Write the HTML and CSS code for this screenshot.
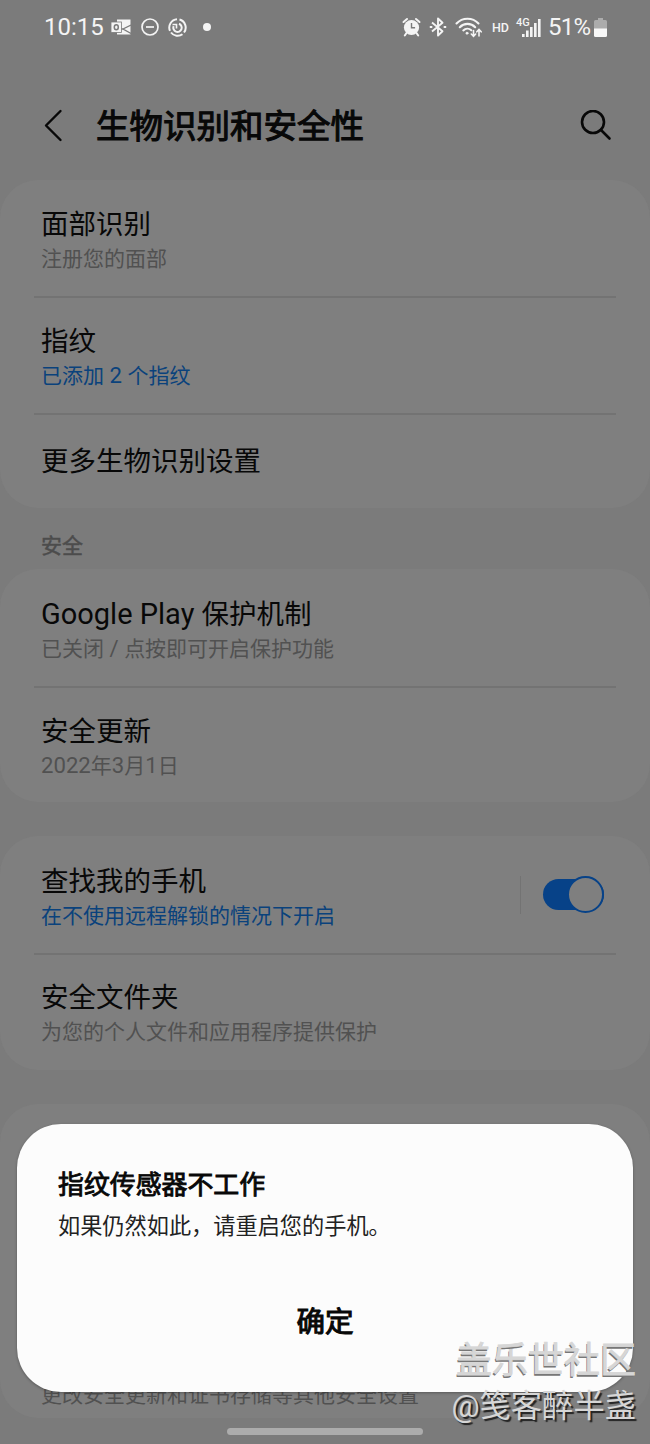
FILE: index.html
```
<!DOCTYPE html>
<html lang="zh-CN">
<head>
    <meta charset="UTF-8">
    <meta name="viewport" content="width=device-width, initial-scale=1.0">
    <title>生物识别和安全性</title>
    <link rel="stylesheet" href="styles.css">
</head>
<body>
    <div class="screen">
        <div class="status-bar">
            <div class="status-left">
                <span class="time">10:15</span>
                <!-- Outlook -->
                <svg class="icon-mail" width="20" height="18" viewBox="0 0 20 18">
                    <path d="M6 1.500h13.500v15H6z" fill="#f4f4f4"/>
                    <path d="M20 7l-8 4 8 4.500M12 11H9" fill="none" stroke="#7b7b7b" stroke-width="1.300"/>
                    <rect x="0" y="4" width="10.500" height="10.500" fill="#f4f4f4" stroke="#7b7b7b" stroke-width="0.800"/>
                    <ellipse cx="5.300" cy="9.200" rx="2" ry="2.500" fill="none" stroke="#7b7b7b" stroke-width="1.500"/>
                </svg>
                <!-- Do not disturb -->
                <svg class="icon-dnd" width="18" height="18" viewBox="0 0 18 18" fill="none" stroke="#f4f4f4" stroke-width="1.7">
                    <circle cx="9" cy="9" r="8"/>
                    <path d="M5 9h8"/>
                </svg>
                <!-- Sync -->
                <svg class="icon-sync" width="19" height="19" viewBox="0 0 19 19" fill="none" stroke="#f4f4f4" stroke-width="2">
                    <path d="M11.5 1.5A8.3 8.3 0 0 1 16 14.5"/>
                    <path d="M14.5 16.2A8.3 8.3 0 0 1 3 14.5"/>
                    <path d="M2 12.8A8.3 8.3 0 0 1 9 1.2"/>
                    <path d="M11 5.800A4.200 4.200 0 1 1 5.600 8.200"/>
                    <path d="M4.500 6.500h4v4" stroke-width="1.600"/>
                </svg>
                <span class="dot"></span>
            </div>
            <div class="status-right">
                <!-- Alarm -->
                <svg class="icon-alarm" width="19" height="20" viewBox="0 0 19 20">
                    <circle cx="9.5" cy="10.5" r="7.6" fill="#f4f4f4"/>
                    <path d="M1.5 5L5 2M17.5 5L14 2M4.5 16L2.8 18.5M14.5 16l1.7 2.5" stroke="#f4f4f4" stroke-width="2" stroke-linecap="round"/>
                    <path d="M9.5 6v4.8h3.6" fill="none" stroke="#7b7b7b" stroke-width="1.4"/>
                </svg>
                <!-- Bluetooth -->
                <svg class="icon-bt" width="18" height="20" viewBox="0 0 18 20" fill="none" stroke="#f4f4f4" stroke-width="1.9">
                    <path d="M3 5.500l10.500 8.700L9 18.500v-17l4.500 4.300L3 14.500" stroke-linejoin="round"/>
                    <path d="M.8 10h2.500M14.700 10h2.500" stroke-width="2.2"/>
                </svg>
                <!-- Wi-Fi -->
                <svg class="icon-wifi" width="28" height="21" viewBox="0 0 28 21" fill="none" stroke="#f4f4f4" stroke-width="2.1" stroke-linecap="round">
                    <path d="M1.5 6.5a15 15 0 0 1 22 0"/>
                    <path d="M4.8 10.2a10.5 10.5 0 0 1 15.4 0"/>
                    <path d="M8.3 13.4a6 6 0 0 1 8-.2"/>
                    <circle cx="12" cy="16.2" r="1" fill="#f4f4f4" stroke-width="1"/>
                    <path d="M18.5 13.500V19M16.300 17l2.200 2.300 2.200-2.300M24 19v-6.500M21.800 14.800L24 12.500l2.200 2.300" stroke-width="1.6"/>
                </svg>
                <span class="hd">HD</span>
                <div class="signal">
                    <span class="net">4G</span>
                    <svg width="19" height="19" viewBox="0 0 19 19" fill="#f4f4f4">
                        <rect x="0" y="16" width="2.600" height="3"/>
                        <rect x="4" y="12.500" width="2.600" height="6.500"/>
                        <rect x="8" y="9" width="2.600" height="10"/>
                        <rect x="12" y="5" width="2.600" height="14"/>
                        <rect x="16" y="1" width="2.600" height="18"/>
                    </svg>
                </div>
                <span class="percent">51%</span>
                <!-- Battery -->
                <svg class="icon-battery" width="13" height="19" viewBox="0 0 13 19">
                    <path d="M4 0h5v2h2.500Q13 2 13 3.500V11H0V3.500Q0 2 1.500 2H4z" fill="#acacac"/>
                    <path d="M0 10.500h13v7q0 1.500-1.500 1.500h-10Q0 19 0 17.500z" fill="#f8f8f8"/>
                </svg>
            </div>
        </div>

        <div class="header">
            <svg width="20" height="34" viewBox="0 0 20 34" fill="none" stroke="#080808" stroke-width="2.4" stroke-linecap="round" stroke-linejoin="round">
                <path d="M16.500 2L2 16.500 16.500 31"/>
            </svg>
            <h1>生物识别和安全性</h1>
            <svg width="32" height="32" viewBox="0 0 32 32" fill="none" stroke="#080808" stroke-width="2.600" stroke-linecap="round">
                <circle cx="13" cy="12" r="11"/>
                <path d="M21 20l8.500 8.500"/>
            </svg>
        </div>

        <div class="card">
            <div class="row">
                <div class="title">面部识别</div>
                <div class="sub">注册您的面部</div>
            </div>
            <div class="row">
                <div class="title">指纹</div>
                <div class="sub active">已添加<span class="latin"> 2 </span>个指纹</div>
            </div>
            <div class="row single">
                <div class="title">更多生物识别设置</div>
            </div>
        </div>

        <h2 class="section">安全</h2>

        <div class="card security">
            <div class="row">
                <div class="title"><span class="latin">Google Play </span>保护机制</div>
                <div class="sub">已关闭<span class="latin"> / </span>点按即可开启保护功能</div>
            </div>
            <div class="row">
                <div class="title">安全更新</div>
                <div class="sub"><span class="latin">2022</span>年<span class="latin">3</span>月<span class="latin">1</span>日</div>
            </div>
        </div>

        <div class="card spaced device">
            <div class="row with-switch">
                <div>
                    <div class="title">查找我的手机</div>
                    <div class="sub active">在不使用远程解锁的情况下开启</div>
                </div>
                <div class="switch-area">
                    <div class="switch"><span class="knob"></span></div>
                </div>
            </div>
            <div class="row">
                <div class="title">安全文件夹</div>
                <div class="sub">为您的个人文件和应用程序提供保护</div>
            </div>
        </div>

        <div class="card spaced last">
            <div class="sub">更改安全更新和证书存储等其他安全设置</div>
        </div>

        <div class="dialog">
            <div class="dialog-title">指纹传感器不工作</div>
            <div class="dialog-text">如果仍然如此，请重启您的手机。</div>
            <button class="ok">确定</button>
        </div>

        <div class="nav-handle"></div>

        <div class="watermark">
            <div class="community">盖乐世社区</div>
            <div class="author">@笺客醉半盏</div>
        </div>
    </div>
</body>
</html>
```
FILE: styles.css
```
* {
    box-sizing: border-box;
}
body {
    margin: 0;
    font-family: Roboto, "Noto Sans CJK SC", sans-serif;
    background-color: #7b7b7b;
    color: #080808;
}
.screen {
    position: relative;
    width: 650px;
    height: 1444px;
    overflow: hidden;
}
svg {
    display: block;
    flex-shrink: 0;
}

/* status bar */
.status-bar {
    display: flex;
    justify-content: space-between;
    height: 54px;
    padding: 0 43px 0 44px;
    color: #f4f4f4;
}
.status-left, .status-right {
    display: flex;
    align-items: center;
}
.time, .percent {
    font-size: 24px;
    line-height: 56px;
}
.time {
    width: 59px;
}
.icon-mail {
    margin-left: 8px;
}
.icon-dnd {
    margin-left: 10px;
}
.icon-sync {
    margin-left: 9px;
}
.dot {
    width: 8px;
    height: 8px;
    margin-left: 16px;
    border-radius: 50%;
    background-color: #f4f4f4;
}
.icon-bt {
    margin-left: 8px;
}
.icon-wifi {
    margin-left: 8px;
}
.hd {
    margin-left: 9px;
    font-size: 12.5px;
    font-weight: 500;
}
.signal {
    display: flex;
    align-items: flex-end;
    margin-left: 7px;
}
.net {
    width: 14px;
    margin-right: -8px;
    font-size: 11px;
    font-weight: 500;
    line-height: 10px;
    align-self: flex-start;
}
.percent {
    width: 42px;
    margin-left: 7px;
    letter-spacing: -0.8px;
}
.icon-battery {
    margin-left: 4px;
}

/* title bar */
.header {
    display: flex;
    align-items: center;
    height: 126px;
    padding: 17px 38px 0 44px;
}
h1 {
    flex: 1;
    margin: 3px 0 0 32px;
    font-size: 33.5px;
    font-weight: 400;
    line-height: 50px;
    -webkit-text-stroke: 1.1px #080808;
}

/* settings list */
.card {
    border-radius: 38px;
    background-color: #7f7f7f;
}
.row {
    position: relative;
    height: 117px;
    padding: 27px 41px 0;
}
.row + .row::before {
    content: "";
    position: absolute;
    top: -1px;
    left: 34px;
    right: 34px;
    height: 2px;
    background-color: #737373;
}
.row.single {
    height: 94px;
    padding-top: 30px;
}
.title {
    font-size: 27.5px;
    line-height: 36px;
}
.sub {
    font-size: 21px;
    line-height: 32px;
    color: #515151;
}
.sub.active {
    color: #0a427c;
}
/* latin letters and digits run a little larger than the chinese */
.latin {
    font-size: 1.055em;
    line-height: 1;
}
.section {
    height: 61px;
    margin: 0;
    padding-left: 41px;
    font-size: 21px;
    font-weight: 400;
    line-height: 76px;
    color: #4c4c4c;
    -webkit-text-stroke: 0.5px #4c4c4c;
}
.security .row:first-child, .device .row:first-child {
    height: 118px;
    padding-top: 28px;
}
.security .row:last-child {
    height: 115px;
}
.device .row:last-child {
    height: 116px;
    padding-top: 26px;
}
.spaced {
    margin-top: 34px;
}
.last {
    height: 314px;
    padding: 275px 41px 0;
}
.with-switch {
    display: flex;
    justify-content: space-between;
}
.switch-area {
    height: 38px;
    margin-top: 12px;
    padding: 3px 5px 0 22px;
    border-left: 1px solid #737373;
}
.switch {
    display: flex;
    align-items: center;
    justify-content: flex-end;
    width: 61px;
    height: 31px;
    border-radius: 16px;
    background-color: #074288;
}
.knob {
    width: 37px;
    height: 37px;
    flex-shrink: 0;
    border: 2px solid #074288;
    border-radius: 50%;
    background-color: #7f7f7f;
}

/* dialog over the list */
.dialog {
    position: absolute;
    top: 1124px;
    left: 17px;
    width: 616px;
    height: 268px;
    padding: 41px 41px 0;
    border-radius: 44px;
    background-color: #fcfcfc;
    box-shadow: 0 1px 3px rgba(0,0,0,0.3);
}
.dialog-title {
    font-size: 25.9px;
    font-weight: 400;
    line-height: 40px;
    -webkit-text-stroke: 0.9px #080808;
}
.dialog-text {
    font-size: 22.2px;
    line-height: 42px;
    color: #222;
}
.ok {
    display: block;
    width: 100%;
    height: 60px;
    margin-top: 42px;
    padding: 0;
    border: none;
    background: none;
    font-family: inherit;
    font-size: 28.5px;
    font-weight: 400;
    color: #080808;
    -webkit-text-stroke: 1.1px #080808;
}
.nav-handle {
    position: absolute;
    left: 227px;
    bottom: 9px;
    width: 196px;
    height: 7px;
    border-radius: 4px;
    background-color: #acacac;
}

/* watermark */
.watermark {
    position: absolute;
    right: 14px;
    bottom: 15px;
    text-align: right;
    white-space: nowrap;
    color: #d6d6d6;
}
.community {
    font-size: 36px;
    line-height: 48px;
    -webkit-text-stroke: 0.8px #d6d6d6;
    text-shadow: -1px 2px 0 #777;
}
.author {
    font-size: 31.3px;
    line-height: 44px;
    text-shadow: 2px 2px 1px #222;
}
```
